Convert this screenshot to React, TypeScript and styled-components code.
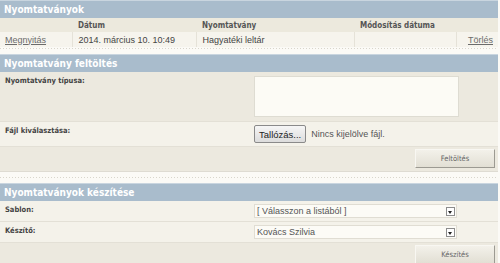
import React from 'react';
import styled, { createGlobalStyle } from 'styled-components';

const GlobalStyle = createGlobalStyle`
	html, body {
		margin: 0;
		padding: 0;
		background: #fbfaf6;
	}
	body {
		font-family: 'Liberation Sans', Arial, sans-serif;
		font-size: 9px;
		color: #333;
	}
`;

const rows = [
	{ date: '2014. március 10. 10:49', name: 'Hagyatéki leltár', modified: '' }
];

const App = () => {
	return (
		<Page>
			<GlobalStyle />
			<Panel>
				<Header>Nyomtatványok</Header>
				<Table>
					<colgroup>
						<col style={{ width: 72 }} />
						<col style={{ width: 124 }} />
						<col style={{ width: 158 }} />
						<col style={{ width: 102 }} />
						<col />
					</colgroup>
					<thead>
						<tr>
							<Th></Th>
							<Th>Dátum</Th>
							<Th>Nyomtatvány</Th>
							<Th>Módosítás dátuma</Th>
							<Th></Th>
						</tr>
					</thead>
					<tbody>
						{rows.map((r, i) => (
							<tr key={`row-${i}`}>
								<Td>
									<Link href="#">Megnyitás</Link>
								</Td>
								<Td>{r.date}</Td>
								<Td>{r.name}</Td>
								<Td>{r.modified}</Td>
								<Td align="right">
									<Link href="#">Törlés</Link>
								</Td>
							</tr>
						))}
					</tbody>
				</Table>
			</Panel>
			<Separator />

			<Panel>
				<Header>Nyomtatvány feltöltés</Header>
				<FormRow $tall>
					<Label>Nyomtatvány típusa:</Label>
					<Field>
						<TextArea />
					</Field>
				</FormRow>
				<FormRow $light>
					<Label>Fájl kiválasztása:</Label>
					<Field>
						<BrowseButton type="button">Tallózás...</BrowseButton>
						<FileText>Nincs kijelölve fájl.</FileText>
					</Field>
				</FormRow>
				<ButtonRow>
					<ActionButton type="button">Feltöltés</ActionButton>
				</ButtonRow>
			</Panel>
			<Separator $double />

			<Panel>
				<Header>Nyomtatványok készítése</Header>
				<FormRow $light>
					<Label>Sablon:</Label>
					<Field>
						<Select>
							<span>[ Válasszon a listából ]</span>
							<Arrow />
						</Select>
					</Field>
				</FormRow>
				<FormRow $light>
					<Label>Készítő:</Label>
					<Field>
						<Select>
							<span>Kovács Szilvia</span>
							<Arrow />
						</Select>
					</Field>
				</FormRow>
				<ButtonRow>
					<ActionButton type="button">Készítés</ActionButton>
				</ButtonRow>
			</Panel>
		</Page>
	);
};

const Page = styled.div`
	width: 498px;
	display: flex;
	flex-direction: column;
`;

const Panel = styled.div`
	display: flex;
	flex-direction: column;
	background: #edeae0;
`;

const Header = styled.div`
	height: 17px;
	line-height: 17px;
	padding-left: 4px;
	background: #a9bccc;
	color: #fff;
	font-family: 'DejaVu Sans Condensed', 'DejaVu Sans', Verdana, sans-serif;
	font-stretch: condensed;
	font-weight: bold;
	font-size: 10px;
	border-top: 1px solid #c9d5df;
`;

const Table = styled.table`
	width: 100%;
	border-collapse: collapse;
	table-layout: fixed;
`;

const Th = styled.th`
	height: 14px;
	padding: 0 0 0 6px;
	text-align: left;
	font-family: 'DejaVu Sans Condensed', 'DejaVu Sans', Verdana, sans-serif;
	font-stretch: condensed;
	font-size: 8px;
	font-weight: bold;
	color: #555;
	background: #ece9dd;
	&:first-child {
		padding-left: 5px;
	}
`;

const Td = styled.td`
	height: 15px;
	padding: 0 0 0 6px;
	background: #f6f4ed;
	border-left: 1px solid #e5e2d8;
	color: #444;
	white-space: nowrap;
	&:first-child {
		padding-left: 5px;
		border-left: none;
	}
	&:last-child {
		padding-right: 5px;
	}
`;

const Link = styled.a`
	color: #6b6b6b;
	text-decoration: underline;
`;

const Separator = styled.div<{ $double?: boolean }>`
	height: 7px;
	border-top: ${p => (p.$double ? '1px solid #dedbd2' : 'none')};
	background: #fbfaf6;
	background-image: linear-gradient(to right, #d9d6cc 50%, transparent 50%);
	background-size: 3px 1px;
	background-repeat: repeat-x;
	background-position: 0 ${p => (p.$double ? '5px' : '1px')};
	margin-bottom: ${p => (p.$double ? '4px' : '0')};
`;

const FormRow = styled.div<{ $tall?: boolean; $light?: boolean }>`
	display: flex;
	align-items: ${p => (p.$tall ? 'flex-start' : 'center')};
	min-height: ${p => (p.$tall ? '49px' : '19px')};
	background: ${p => (p.$light ? '#f4f2ea' : '#ece9df')};
	border-bottom: 1px solid #e3e0d6;
`;

const Label = styled.div`
	width: 254px;
	padding: 4px 0 0 5px;
	box-sizing: border-box;
	align-self: flex-start;
	font-family: 'DejaVu Sans Condensed', 'DejaVu Sans', Verdana, sans-serif;
	font-stretch: condensed;
	font-size: 7.5px;
	font-weight: bold;
	color: #444;
`;

const Field = styled.div`
	flex: 1;
	display: flex;
	align-items: center;
	gap: 5px;
	padding: 3px 0;
`;

const TextArea = styled.div`
	width: 203px;
	height: 39px;
	margin-top: 1px;
	background: #fcfbf5;
	border: 1px solid #dedcd2;
	position: relative;
	&::after {
		content: '';
		position: absolute;
		right: 1px;
		bottom: 1px;
		width: 6px;
		height: 6px;
		background-image: radial-gradient(#b9b6ad 40%, transparent 45%);
		background-size: 2px 2px;
	}
`;

const BrowseButton = styled.button`
	height: 18px;
	padding: 0 4px;
	font-family: 'Liberation Sans', Arial, sans-serif;
	font-size: 9.5px;
	color: #222;
	background: linear-gradient(#f6f6f6, #dcdcdc);
	border: 1px solid #8a8a8a;
	border-radius: 2px;
`;

const FileText = styled.span`
	font-size: 9px;
	color: #555;
`;

const ButtonRow = styled.div`
	display: flex;
	justify-content: flex-end;
	padding: 2px 3px 3px 0;
	background: #ece9df;
`;

const ActionButton = styled.button`
	width: 80px;
	height: 19px;
	font-family: 'DejaVu Sans Condensed', 'DejaVu Sans', Verdana, sans-serif;
	font-stretch: condensed;
	font-size: 7.5px;
	color: #666;
	background: linear-gradient(#f3f1ea, #e2dfd4);
	border: 1px solid #f8f7f2;
	border-right-color: #9c9a92;
	border-bottom-color: #9c9a92;
	padding: 0;
`;

const Select = styled.div`
	width: 203px;
	height: 14px;
	display: flex;
	align-items: center;
	justify-content: space-between;
	padding-left: 2px;
	box-sizing: border-box;
	background: #fcfbf6;
	border: 1px solid #e0ddd3;
	font-size: 9px;
	color: #555;
`;

const Arrow = styled.div`
	width: 9px;
	height: 9px;
	margin-right: 1px;
	background: #fff;
	border: 1px solid #8c8c8c;
	box-sizing: border-box;
	position: relative;
	&::after {
		content: '';
		position: absolute;
		left: 1px;
		top: 3px;
		border-left: 2.5px solid transparent;
		border-right: 2.5px solid transparent;
		border-top: 3px solid #222;
	}
`;

export default App;
